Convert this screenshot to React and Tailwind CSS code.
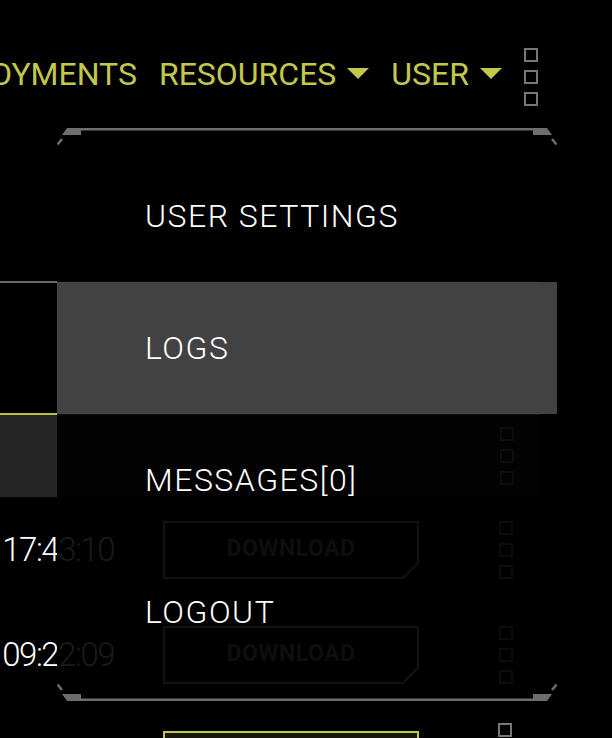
import React from 'react';

const lime = '#c2c84b';

function Caret() {
  return (
    <svg width="22" height="11" viewBox="0 0 22 11" className="shrink-0">
      <polygon points="0,0 22,0 11,11" fill={lime} />
    </svg>
  );
}

function Squares({ className = '' }) {
  return (
    <div className={`flex flex-col gap-[8px] ${className}`}>
      <div className="w-[14px] h-[14px] border-2 border-[#777]" />
      <div className="w-[14px] h-[14px] border-2 border-[#777]" />
      <div className="w-[14px] h-[14px] border-2 border-[#777]" />
    </div>
  );
}

function DownloadButton() {
  return (
    <div className="relative w-[256px] h-[58px] flex items-center justify-center">
      <svg width="256" height="58" viewBox="0 0 256 58" className="absolute inset-0">
        <polygon points="1,1 255,1 255,42 240,57 1,57" fill="none" stroke={lime} strokeWidth="2" />
      </svg>
      <span className="relative text-[23px] font-bold tracking-[0.5px] text-[#8a8a8a]">DOWNLOAD</span>
    </div>
  );
}

function Frame({ flip }) {
  return (
    <svg
      width="500"
      height="18"
      viewBox="0 0 500 18"
      className={`absolute left-0 ${flip ? 'bottom-0 -scale-y-100' : 'top-0'}`}
    >
      <rect x="20" y="0" width="460" height="2.5" fill="#6e6e6e" />
      <polygon points="10,0 24,0 24,7 5,7" fill="#6e6e6e" />
      <polygon points="476,0 490,0 495,7 476,7" fill="#6e6e6e" />
      <line x1="5" y1="11" x2="0.5" y2="16.5" stroke="#6e6e6e" strokeWidth="2.5" />
      <line x1="495" y1="11" x2="499.5" y2="16.5" stroke="#6e6e6e" strokeWidth="2.5" />
    </svg>
  );
}

const menu = ['USER SETTINGS', 'LOGS', 'MESSAGES[0]', 'LOGOUT'];

const rows = [
  { time: '2023-10-14 17:43:10' },
  { time: '2023-10-12 09:22:09' },
];

export default function App() {
  return (
    <div
      className="relative w-[612px] h-[738px] overflow-hidden bg-black text-white"
      style={{ fontFamily: 'Roboto, "Liberation Sans", sans-serif' }}
    >
      {/* Top nav */}
      <div className="flex justify-end items-center pr-[74px] pt-[51px] h-[105px] whitespace-nowrap">
        <div className="flex items-center gap-[22px] text-[32px] leading-none" style={{ color: lime }}>
          <span className="-mt-[9px]">DEPLOYMENTS</span>
          <div className="flex items-center gap-[11px] -mt-[9px]">
            <span>RESOURCES</span>
            <Caret />
          </div>
          <div className="flex items-center gap-[11px] -mt-[9px]">
            <span>USER</span>
            <Caret />
          </div>
          <Squares className="-mt-[2px] gap-[6px]" />
        </div>
      </div>

      {/* Page underneath */}
      <div className="mt-[176px]">
        <div className="h-[134px] border-t-2 border-b-2 border-t-[#6a6a6a] border-b-[#b9bf45] w-[540px]" />
        <div className="h-[82px] bg-[#262626] w-[540px] flex items-center justify-end pr-[26px]">
          <Squares />
        </div>
        {rows.map((r) => (
          <div key={r.time} className="h-[105px] flex items-center">
            <div className="w-[114px] flex justify-end whitespace-nowrap text-[33px] font-light tracking-[-1.5px]">
              {r.time}
            </div>
            <div className="ml-[49px]">
              <DownloadButton />
            </div>
            <Squares className="ml-[80px]" />
          </div>
        ))}
        <div className="flex items-start mt-[16px]">
          <div className="ml-[163px] w-[256px] h-[60px] border-2 border-[#c2c84b] bg-[#17180b] mt-[8px]" />
          <div className="ml-[79px] w-[14px] h-[14px] border-2 border-[#777]" />
        </div>
      </div>

      {/* User dropdown */}
      <div className="absolute left-[57px] top-[128px] w-[500px] h-[573px] bg-black/90">
        <Frame />
        <div className="pt-[22px]">
          {menu.map((m, i) => (
            <div
              key={m}
              className={`h-[132px] flex items-center pl-[88px] text-[32px] font-light tracking-[1.5px] text-white ${
                i === 1 ? 'bg-[#424242]' : ''
              }`}
            >
              {m}
            </div>
          ))}
        </div>
        <Frame flip />
      </div>
    </div>
  );
}
